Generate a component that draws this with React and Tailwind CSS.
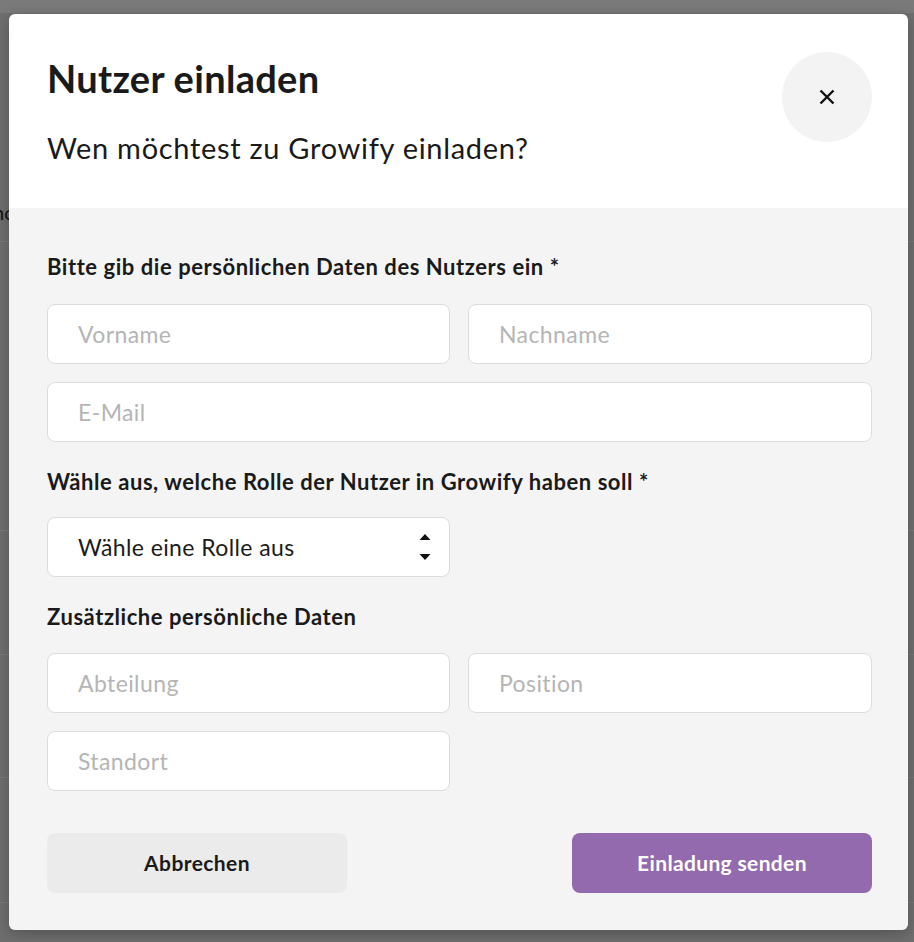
import React from "react";

function Field({ placeholder, className = "" }) {
  return (
    <input
      type="text"
      placeholder={placeholder}
      className={
        "h-[60px] w-full rounded-[8px] border border-[#dcdcdc] bg-white px-[30px] text-[23px] tracking-[0.4px] text-[#1c1c1c] outline-none placeholder:text-[#b5b5b5] " +
        className
      }
    />
  );
}

function Label({ children, className = "" }) {
  return (
    <div className={"text-[22px] font-bold leading-[24px] tracking-[0.55px] text-[#1a1a1a] " + className}>
      {children}
    </div>
  );
}

export default function App() {
  return (
    <div className="relative h-[942px] w-full overflow-hidden bg-[#6f6f6f] font-['Lato',sans-serif]">
      {/* dimmed page behind the dialog */}
      <div className="h-[13px] w-full bg-[#7a7a7a]" />
      <div className="absolute left-0 top-[241px] h-px w-full bg-[#7c7c7c]" />
      <div className="absolute left-0 top-[530px] h-px w-full bg-[#7c7c7c]" />
      <div className="absolute left-0 top-[654px] h-px w-full bg-[#7c7c7c]" />
      <div className="absolute left-0 top-[777px] h-px w-full bg-[#7c7c7c]" />
      <div className="absolute left-0 top-[902px] h-px w-full bg-[#7c7c7c]" />
      <div className="absolute left-[-7px] top-[200px] text-[20px] leading-[24px] text-[#111]">nc</div>

      {/* dialog */}
      <div className="absolute left-[9px] top-[14px] w-[899px] overflow-hidden rounded-[6px] shadow-[0_4px_16px_rgba(0,0,0,0.25)]">
        <div className="flex h-[194px] items-start justify-between bg-white pl-[38px] pr-[36px] pt-[38px]">
          <div className="pt-[3px]">
            <h2 className="text-[38px] font-bold leading-[46px] tracking-[0.3px] text-[#1a1a1a]">Nutzer einladen</h2>
            <p className="mt-[30px] text-[29px] leading-[34px] tracking-[0.7px] text-[#1a1a1a]">
              Wen möchtest zu Growify einladen?
            </p>
          </div>
          <button className="flex h-[90px] w-[90px] items-center justify-center rounded-full bg-[#f3f3f3]">
            <svg width="16" height="16" viewBox="0 0 16 16" fill="none">
              <path d="M1.5 1.5 L14.5 14.5 M14.5 1.5 L1.5 14.5" stroke="#111" strokeWidth="2.4" strokeLinecap="butt" />
            </svg>
          </button>
        </div>

        <div className="flex flex-col bg-[#f4f4f4] pb-[37px] pl-[38px] pr-[36px] pt-[47px]">
          <Label>Bitte gib die persönlichen Daten des Nutzers ein *</Label>
          <div className="mt-[25px] grid grid-cols-[403px_404px] gap-[18px]">
            <Field placeholder="Vorname" />
            <Field placeholder="Nachname" />
            <Field placeholder="E-Mail" className="col-span-2" />
          </div>

          <Label className="mt-[28px]">Wähle aus, welche Rolle der Nutzer in Growify haben soll *</Label>
          <div className="mt-[23px] grid grid-cols-[403px_404px] gap-[18px]">
            <div className="flex h-[60px] items-center justify-between rounded-[8px] border border-[#dcdcdc] bg-white pl-[30px] pr-[18px]">
              <span className="text-[23px] tracking-[0.4px] text-[#1c1c1c]">Wähle eine Rolle aus</span>
              <svg width="12" height="28" viewBox="0 0 12 28" fill="#111">
                <path d="M6 1 L11.5 7 L0.5 7 Z" />
                <path d="M0.5 21 L11.5 21 L6 27 Z" />
              </svg>
            </div>
          </div>

          <Label className="mt-[28px]">Zusätzliche persönliche Daten</Label>
          <div className="mt-[24px] grid grid-cols-[403px_404px] gap-[18px]">
            <Field placeholder="Abteilung" />
            <Field placeholder="Position" />
            <Field placeholder="Standort" />
          </div>

          <div className="mt-[42px] flex justify-between">
            <button className="h-[60px] w-[300px] rounded-[8px] bg-[#ebebeb] text-[21px] font-bold tracking-[0.4px] text-[#1a1a1a]">
              Abbrechen
            </button>
            <button className="h-[60px] w-[300px] rounded-[8px] bg-[#936aad] text-[21px] font-bold tracking-[0.35px] text-white">
              Einladung senden
            </button>
          </div>
        </div>
      </div>
    </div>
  );
}
